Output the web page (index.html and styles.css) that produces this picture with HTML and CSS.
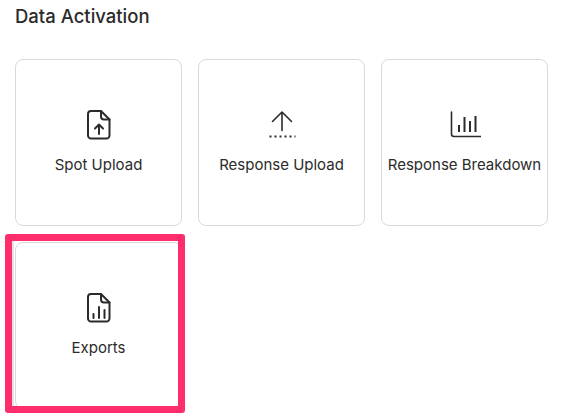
FILE: index.html
```html
<!DOCTYPE html>
<html lang="en">
<head>
  <meta charset="UTF-8">
  <title>Data Activation</title>
  <link rel="stylesheet" href="styles.css">
</head>
<body>
  <h1 class="title">Data Activation</h1>
  <div class="grid">
    <div class="card">
      <svg class="icon" viewBox="0 0 32 32">
        <path d="M8 2h10l8.500 8.500V26.500a3 3 0 0 1-3 3H8a3 3 0 0 1-3-3V5a3 3 0 0 1 3-3z"/>
        <path d="M18 2v5.500a3 3 0 0 0 3 3h5.500"/>
        <path d="M16 25V16M12 19.500l4-4 4 4"/>
      </svg>
      <span class="label">Spot Upload</span>
    </div>
    <div class="card">
      <svg class="icon" viewBox="0 0 32 32">
        <path class="thin" d="M16 21.500V3.500M6.500 12.500L16 3l9.500 9.500"/>
        <path class="dots" d="M3.500 27.500h26"/>
      </svg>
      <span class="label">Response Upload</span>
    </div>
    <div class="card">
      <svg class="icon" viewBox="0 0 32 32">
        <path class="thin" d="M2.500 3v22a2.500 2.500 0 0 0 2.500 2.500h26.500"/>
        <path class="bars" d="M10 23v-7M15.500 23V8M21 23V12M26.500 23V7"/>
      </svg>
      <span class="label">Response Breakdown</span>
    </div>
    <div class="card">
      <svg class="icon" viewBox="0 0 32 32">
        <path d="M8 2h10l8.500 8.500V26.500a3 3 0 0 1-3 3H8a3 3 0 0 1-3-3V5a3 3 0 0 1 3-3z"/>
        <path d="M18 2v5.500a3 3 0 0 0 3 3h5.500"/>
        <path d="M10.500 26v-4M16 26V15M21.500 26V18"/>
      </svg>
      <span class="label">Exports</span>
      <div class="highlight"></div>
    </div>
  </div>
</body>
</html>
```

FILE: styles.css
```css
html, body {
  height: 100%;
}

body {
  margin: 0;
  padding: 0 15px;
  background: #fff;
  font-family: 'Inter', sans-serif;
  color: #2b2b2b;
}

.title {
  margin: 0;
  padding-top: 5px;
  height: 59px;
  box-sizing: border-box;
  font-size: 18.500px;
  line-height: 22px;
  font-weight: 500;
}

.grid {
  display: grid;
  grid-template-columns: repeat(3, 167px);
  grid-auto-rows: 167px;
  gap: 16px;
}

.card {
  position: relative;
  display: flex;
  flex-direction: column;
  align-items: center;
  justify-content: center;
  gap: 14px;
  box-sizing: border-box;
  padding-bottom: 2px;
  border: 1px solid #d9d9d9;
  border-radius: 8px;
}

.icon {
  width: 32px;
  height: 32px;
  fill: none;
  stroke: #2b2b2b;
  stroke-width: 2;
  stroke-linecap: round;
  stroke-linejoin: round;
}

.icon .thin {
  stroke-width: 1.6;
}

.icon .bars {
  stroke-width: 2;
  stroke-linecap: butt;
}

.icon .dots {
  stroke-width: 2;
  stroke-linecap: butt;
  stroke-dasharray: 2 3;
}

.label {
  font-size: 15px;
  line-height: 20px;
  white-space: nowrap;
}

.highlight {
  position: absolute;
  top: -9px;
  left: -11px;
  width: 180px;
  height: 179px;
  box-sizing: border-box;
  border: 7px solid #ff2d6b;
  border-radius: 3px;
  box-shadow: inset 2px 0 0 #e4e4e4;
}
```
